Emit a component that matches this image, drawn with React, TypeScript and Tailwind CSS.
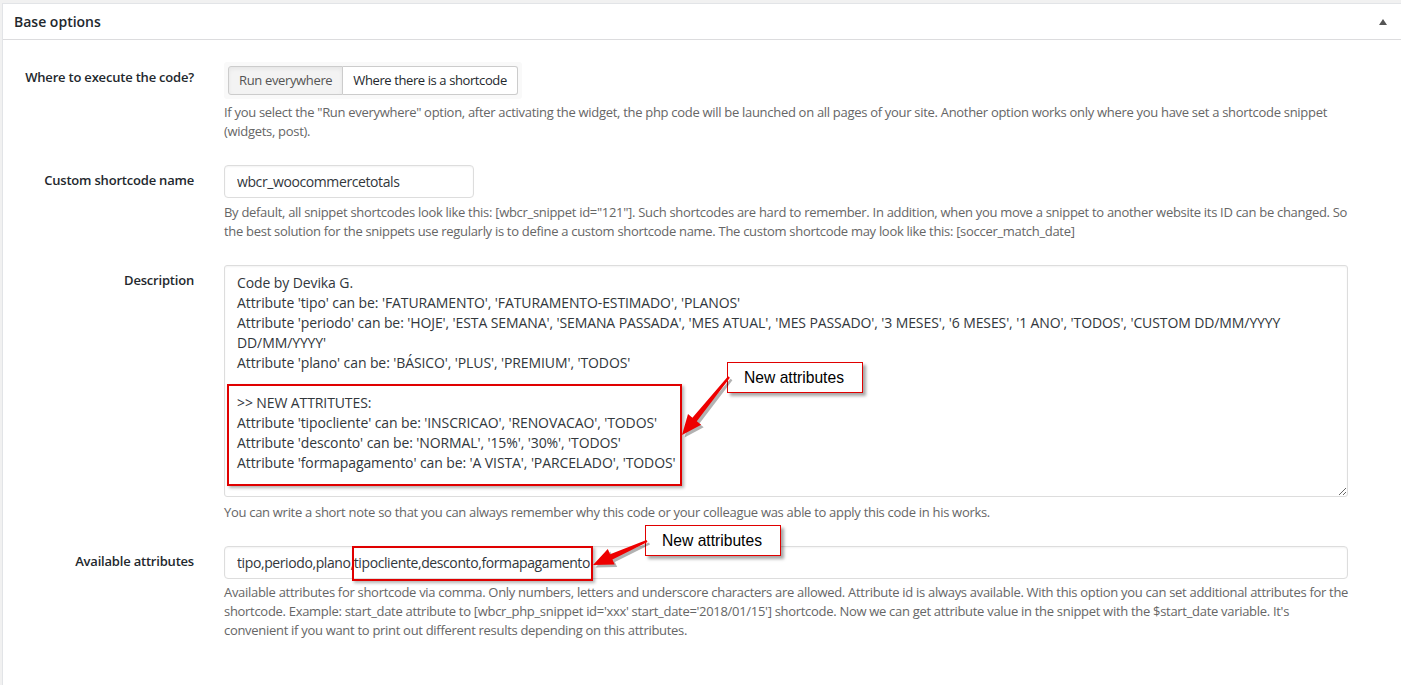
import type { ReactNode } from "react"

const FONT = "font-['Open_Sans','Noto_Sans',sans-serif]"

const DESCRIPTION = [
  "Code by Devika G.",
  "Attribute 'tipo' can be: 'FATURAMENTO', 'FATURAMENTO-ESTIMADO', 'PLANOS'",
  "Attribute 'periodo' can be: 'HOJE', 'ESTA SEMANA', 'SEMANA PASSADA', 'MES ATUAL', 'MES PASSADO', '3 MESES', '6 MESES', '1 ANO', 'TODOS', 'CUSTOM DD/MM/YYYY",
  "DD/MM/YYYY'",
  "Attribute 'plano' can be: 'BÁSICO', 'PLUS', 'PREMIUM', 'TODOS'",
  "",
  ">> NEW ATTRITUTES:",
  "Attribute 'tipocliente' can be: 'INSCRICAO', 'RENOVACAO', 'TODOS'",
  "Attribute 'desconto' can be: 'NORMAL', '15%', '30%', 'TODOS'",
  "Attribute 'formapagamento' can be: 'A VISTA', 'PARCELADO', 'TODOS'",
].join("\n")

// red callout arrow, drawn from tail to tip
function Arrow({ x1, y1, x2, y2 }: { x1: number; y1: number; x2: number; y2: number }) {
  const dx = x2 - x1
  const dy = y2 - y1
  const len = Math.hypot(dx, dy)
  const ux = dx / len
  const uy = dy / len
  const nx = -uy
  const ny = ux
  const head = 20
  const bx = x2 - ux * head
  const by = y2 - uy * head
  const p = (x: number, y: number) => `${x.toFixed(1)},${y.toFixed(1)}`
  const pts = [
    p(x1 + nx * 1.2, y1 + ny * 1.2),
    p(bx + nx * 2.8, by + ny * 2.8),
    p(bx + nx * 8.5, by + ny * 8.5),
    p(x2, y2),
    p(bx - nx * 8.5, by - ny * 8.5),
    p(bx - nx * 2.8, by - ny * 2.8),
    p(x1 - nx * 1.2, y1 - ny * 1.2),
  ].join(" ")
  return (
    <svg className="pointer-events-none absolute left-0 top-0 overflow-visible" width="1" height="1">
      <polygon points={pts} fill="rgba(0,0,0,0.3)" transform="translate(2.5 2.5)" />
      <polygon points={pts} fill="#ee0000" />
    </svg>
  )
}

function Callout({ className }: { className: string }) {
  return (
    <div
      className={`absolute flex h-[31px] w-[136px] items-center border border-[#e00000] bg-white pl-[16px] shadow-[3px_3px_3px_rgba(0,0,0,0.35)] ${className}`}
    >
      <span className="inline-block origin-left scale-x-[0.92] whitespace-nowrap font-['Liberation_Sans',Arial,sans-serif] text-[17px] leading-none text-black">
        New attributes
      </span>
    </div>
  )
}

function Row({ label, className = "", children }: { label: string; className?: string; children: ReactNode }) {
  return (
    <div className={`flex ${className}`}>
      <div className="w-[191px] shrink-0 pt-[5px] text-right text-[13px] font-semibold leading-[20px] tracking-[-0.2px] text-[#23282d]">
        {label}
      </div>
      <div className="relative ml-[30px] w-[1124px] shrink-0">{children}</div>
    </div>
  )
}

function Help({ lines, className = "mt-[4px]" }: { lines: string[]; className?: string }) {
  return (
    <div className={`text-[13px] leading-[19px] tracking-[-0.3px] text-[#666] ${className}`}>
      {lines.map((l) => (
        <div key={l} className="whitespace-nowrap">
          {l}
        </div>
      ))}
    </div>
  )
}

export default function App() {
  return (
    <div className={`h-[685px] overflow-hidden bg-[#f1f1f1] pl-[2px] pt-[3px] ${FONT}`}>
      <div className="h-full w-[1420px] border-l border-t border-[#e2e4e7] bg-white">
        {/* panel header */}
        <div className="flex h-[36px] items-center border-b border-[#dcdcde] pl-[11px]">
          <h2 className="text-[14px] font-semibold text-[#23282d]">Base options</h2>
          <span className="ml-[1278px] h-0 w-0 border-x-[4px] border-b-[6px] border-x-transparent border-b-[#555]" />
        </div>

        <div className="flex flex-col gap-[25px] pt-[22px]">
          <Row label="Where to execute the code?" className="-mb-[1px]">
            <div className="inline-flex rounded-[3px] bg-[#f9f9f9] p-[4px]">
              <button className="h-[29px] rounded-l-[3px] border border-[#ccc] bg-[#f3f3f3] px-[10px] text-[13px] tracking-[-0.35px] text-[#555] shadow-[inset_0_2px_4px_rgba(0,0,0,0.06)]">
                Run everywhere
              </button>
              <button className="h-[29px] rounded-r-[3px] border border-l-0 border-[#ccc] bg-white px-[10px] text-[13px] tracking-[-0.4px] text-[#23282d]">
                Where there is a shortcode
              </button>
            </div>
            <Help
              lines={[
                'If you select the "Run everywhere" option, after activating the widget, the php code will be launched on all pages of your site. Another option works only where you have set a shortcode snippet',
                "(widgets, post).",
              ]}
            />
          </Row>

          <Row label="Custom shortcode name">
            <input
              readOnly
              value="wbcr_woocommercetotals"
              className="h-[33px] w-[250px] rounded-[4px] border border-[#ddd] px-[12px] text-[14px] tracking-[-0.4px] text-[#32373c] shadow-[inset_0_1px_2px_rgba(0,0,0,0.05)] outline-none"
            />
            <Help
              className="mt-[5px]"
              lines={[
                'By default, all snippet shortcodes look like this: [wbcr_snippet id="121"]. Such shortcodes are hard to remember. In addition, when you move a snippet to another website its ID can be changed. So',
                "the best solution for the snippets use regularly is to define a custom shortcode name. The custom shortcode may look like this: [soccer_match_date]",
              ]}
            />
          </Row>

          <Row label="Description" className="-mt-[1px]">
            <textarea
              readOnly
              value={DESCRIPTION}
              className="block h-[232px] w-full resize overflow-hidden whitespace-pre rounded-[3px] border border-[#ddd] px-[12px] pb-[5px] pt-[7px] text-[14px] leading-[20px] tracking-[-0.1px] text-[#32373c] shadow-[inset_0_1px_2px_rgba(0,0,0,0.05)] outline-none"
            />
            <div className="pointer-events-none absolute left-[3px] top-[119px] h-[102px] w-[455px] border-2 border-[#e00000] shadow-[2px_2px_3px_rgba(0,0,0,0.3)]" />
            <Callout className="left-[503px] top-[97px]" />
            <Arrow x1={505} y1={112} x2={458} y2={170} />
            <Help
              className="mt-[6px]"
              lines={[
                "You can write a short note so that you can always remember why this code or your colleague was able to apply this code in his works.",
              ]}
            />
          </Row>

          <Row label="Available attributes" className="-mt-[1px]">
            <input
              readOnly
              value="tipo,periodo,plano,tipocliente,desconto,formapagamento"
              className="h-[33px] w-full rounded-[4px] border border-[#ddd] px-[12px] text-[14px] tracking-[-0.4px] text-[#32373c] shadow-[inset_0_1px_2px_rgba(0,0,0,0.05)] outline-none"
            />
            <div className="pointer-events-none absolute left-[128px] top-0 h-[35px] w-[241px] border-2 border-[#e00000] shadow-[2px_2px_3px_rgba(0,0,0,0.3)]" />
            <Callout className="left-[421px] top-[-21px]" />
            <Arrow x1={423} y1={-5} x2={369} y2={19} />
            <Help
              className="mt-[4px]"
              lines={[
                "Available attributes for shortcode via comma. Only numbers, letters and underscore characters are allowed. Attribute id is always available. With this option you can set additional attributes for the",
                "shortcode. Example: start_date attribute to [wbcr_php_snippet id='xxx' start_date='2018/01/15'] shortcode. Now we can get attribute value in the snippet with the $start_date variable. It's",
                "convenient if you want to print out different results depending on this attributes.",
              ]}
            />
          </Row>
        </div>
      </div>
    </div>
  )
}
